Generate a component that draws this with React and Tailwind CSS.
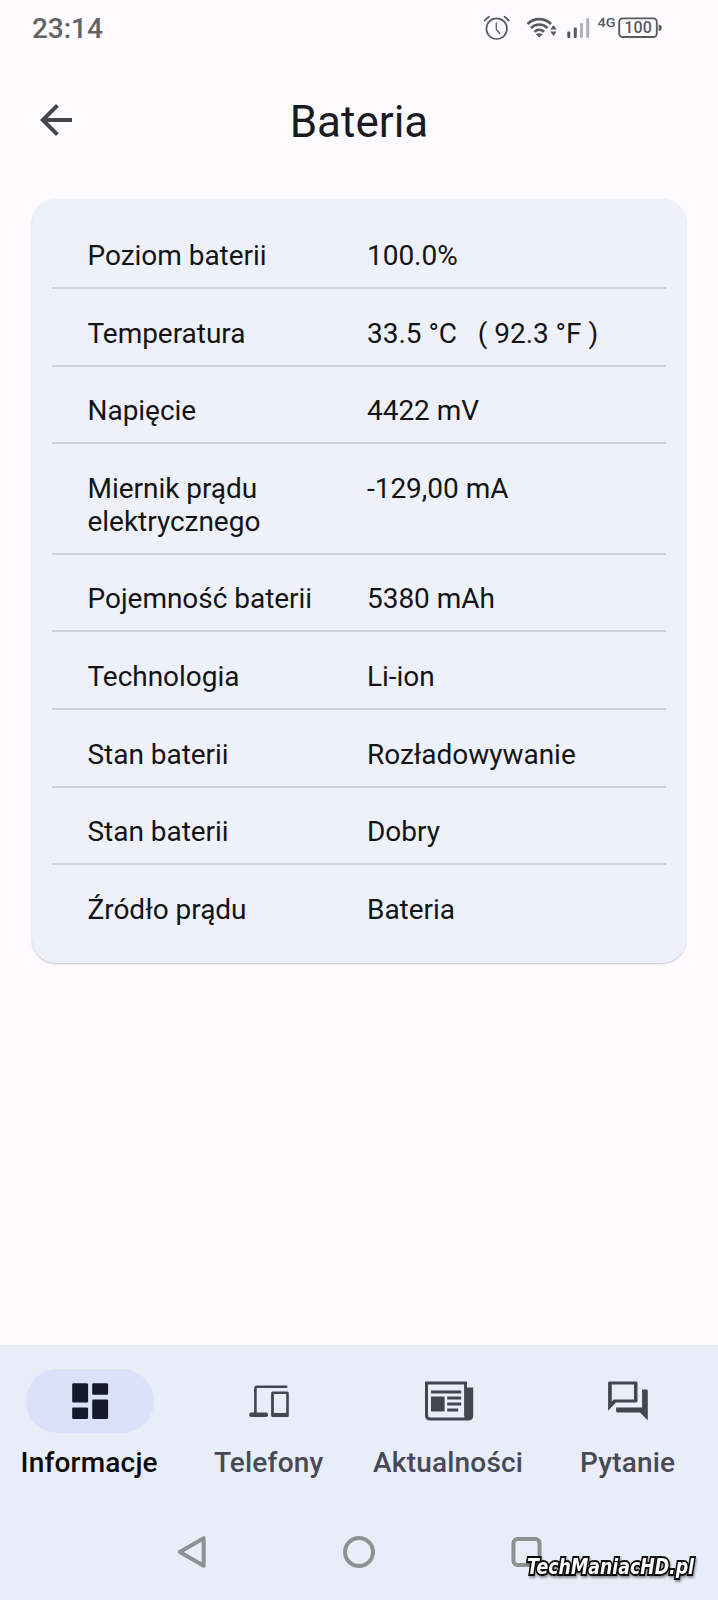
const ROWS = [
  ["Poziom baterii", "100.0%"],
  ["Temperatura", "33.5 °C\u00a0\u00a0\u00a0( 92.3 °F )"],
  ["Napięcie", "4422 mV"],
  ["Miernik prądu elektrycznego", "-129,00 mA"],
  ["Pojemność baterii", "5380 mAh"],
  ["Technologia", "Li-ion"],
  ["Stan baterii", "Rozładowywanie"],
  ["Stan baterii", "Dobry"],
  ["Źródło prądu", "Bateria"],
];

const TABS = [
  { label: "Informacje", Icon: DashboardIcon, active: true },
  { label: "Telefony", Icon: DevicesIcon },
  { label: "Aktualności", Icon: NewspaperIcon },
  { label: "Pytanie", Icon: ChatIcon },
];

function StatusBar() {
  return (
    <header className="flex h-[56px] items-center justify-between pl-8 pr-[55px] text-[#636365]">
      <span className="text-[28px] leading-[33px] font-medium tracking-[-0.05px]">23:14</span>
      <svg width="180" height="30" viewBox="0 0 180 30" fill="none">
        <g stroke="#5a5a5c" strokeWidth="1.700" strokeLinecap="round">
          <circle cx="13.700" cy="15.700" r="10.300" />
          <path d="M13.300 10v6.500l3.500 4" strokeWidth="1.300" />
          <path d="M1.600 7.500l4.300-3.800M21.500 3.700l4.300 3.800" />
        </g>
        <g stroke="#5a5a5c" strokeWidth="2.700">
          <path d="M44.500 11a16.500 16.500 0 0 1 23.500 0" />
          <path d="M48 15a11.500 11.500 0 0 1 16.500 0" />
          <path d="M51.500 18.800a6.500 6.500 0 0 1 9.500 0" />
        </g>
        <path d="M52.800 21.300q3.400-2.200 6.800 0l-3.400 3.300zM67.300 16.400l3.200-4.400 3.200 4.400zM67.300 18.600l3.200 4.400 3.200-4.400z" fill="#5a5a5c" />
        <rect x="84.300" y="18.500" width="3" height="6.500" rx="1" fill="#5a5a5c" />
        <rect x="90.800" y="14.500" width="3" height="10.500" rx="1" fill="#5a5a5c" />
        <rect x="97" y="10" width="3" height="15" rx="1" fill="#b3b2b6" />
        <rect x="103.200" y="5" width="3" height="20" rx="1" fill="#b3b2b6" />
        <text x="114.500" y="13.800" fontSize="13.500" fontWeight="500" textLength="18" lengthAdjust="spacingAndGlyphs" fill="#5a5a5c">
          4G
        </text>
        <rect x="136.200" y="5.400" width="37.600" height="18.600" rx="3.500" stroke="#5a5a5c" strokeWidth="1.900" />
        <path d="M175.700 11.500q3 .5 3 3.300t-3 3.300z" fill="#5a5a5c" />
        <text x="155" y="20.400" fontSize="16" fontWeight="500" textAnchor="middle" textLength="27.500" fill="#5a5a5c">
          100
        </text>
      </svg>
    </header>
  );
}

function DashboardIcon() {
  return (
    <svg width="48" height="48" viewBox="0 0 48 48" fill="#141a29">
      <rect x="6.200" y="6.300" width="15.900" height="19.200" rx="1.300" />
      <rect x="26.200" y="6.300" width="15.900" height="11.500" rx="1.300" />
      <rect x="6.200" y="30.500" width="15.900" height="11.500" rx="1.300" />
      <rect x="26.200" y="22.500" width="15.900" height="19.500" rx="1.300" />
    </svg>
  );
}

function DevicesIcon() {
  return (
    <svg width="48" height="48" viewBox="0 0 48 48" fill="none">
      <path d="M10.400 36V11.500Q10.400 9.800 12.100 9.800H41.200" stroke="#44464f" strokeWidth="2.600" strokeLinecap="round" />
      <rect x="4.300" y="35.400" width="18.600" height="4.500" rx="1.700" fill="#44464f" />
      <path
        fillRule="evenodd"
        fill="#44464f"
        d="M27.600 14.500h14.700q1.500 0 1.500 1.500v22.400q0 1.500-1.500 1.500H27.600q-1.500 0-1.500-1.500V16q0-1.500 1.500-1.500zM28.900 17.100v19h12.300v-19z"
      />
    </svg>
  );
}

function NewspaperIcon() {
  return (
    <svg width="48" height="48" viewBox="0 0 48 48" fill="#44464f" className="overflow-visible">
      <path
        fillRule="evenodd"
        d="M0 4.500H42V10.500H48.200V38.500Q48.200 43.500 43.200 43.500H5.500Q0 43.500 0 38.500ZM3 7.500V38.300Q3 40.600 5.300 40.600H39.800Q39.100 39.500 39.100 38V7.500Z"
      />
      <path d="M6 13.500h30.200v3H6zM6 19.500h13.600v15H6zM22.200 19.500h14v3h-14zM22.200 25.500h14v3h-14zM22.200 31.500h11v3h-11z" />
    </svg>
  );
}

function ChatIcon() {
  return (
    <svg width="48" height="48" viewBox="0 0 48 48" fill="#44464f">
      <path
        fillRule="evenodd"
        d="M5.400 4.500H32.100Q33.500 4.500 33.500 5.900V24.100Q33.500 25.500 32.100 25.500H12L4.100 33.700V5.900Q4.100 4.500 5.400 4.500ZM7.800 7.500V24.400L9.800 22.500H30V7.500Z"
      />
      <path d="M38.100 12.500H42.400Q43.800 12.500 43.800 13.900V43.500L36 35.500H13.500Q12.100 35.500 12.100 34.100V30.500H38.100Z" />
    </svg>
  );
}

function TopBar() {
  return (
    <div className="grid h-[143px] grid-cols-[48px_1fr_48px] items-start px-8">
      <svg width="48" height="48" viewBox="0 0 24 24" fill="#44444f" className="mt-[39.5px]">
        <path d="M20 11H7.830l5.590-5.590L12 4l-8 8 8 8 1.410-1.410L7.830 13H20v-2z" />
      </svg>
      <h1 className="mt-[40px] text-center text-[44px] leading-[52px] text-[#1a1b1f]">Bateria</h1>
    </div>
  );
}

function BatteryCard() {
  return (
    <main className="mx-8 h-[764px] rounded-[24px] bg-[#eff1fa] px-5 pt-[12.4px] shadow-[0_1px_2px_rgba(0,0,0,0.22)]">
      {ROWS.map(([label, value], i) => (
        <div
          key={i}
          className="flex border-b-2 border-[#cfd1da] pt-[28.6px] pb-[14.3px] pl-[35.5px] text-[28px] leading-[32.75px] tracking-[-0.03px] text-[#141416] last:border-0"
        >
          <span className="w-[279.5px] pr-8">{label}</span>
          <span>{value}</span>
        </div>
      ))}
    </main>
  );
}

function TabBar() {
  return (
    <nav className="grid h-[159.5px] grid-cols-4 pt-[24.5px]">
      {TABS.map(({ label, Icon, active }) => (
        <div key={label} className="flex flex-col items-center">
          <div
            className={`flex h-[63.5px] w-[128px] items-center justify-center rounded-full ${active ? "bg-[#dae2f9]" : ""}`}
          >
            <Icon />
          </div>
          <span
            className={`mt-[13px] pr-[1.2px] text-[28px] leading-[33px] font-medium tracking-[0.2px] ${active ? "text-[#0c0c0e]" : "text-[#484a53]"}`}
          >
            {label}
          </span>
        </div>
      ))}
    </nav>
  );
}

function SystemBar() {
  return (
    <div className="grid h-[96px] grid-cols-[168px_167px_34px] items-center pl-[175px]">
      <svg width="34" height="34" viewBox="0 0 34 34" fill="none" stroke="#8f9092" strokeWidth="4" strokeLinejoin="round">
        <path d="M28.700 3.200V30.800L4.700 17Z" />
      </svg>
      <svg width="34" height="34" viewBox="0 0 34 34" fill="none" stroke="#8f9092" strokeWidth="4">
        <circle cx="16" cy="17" r="14" />
      </svg>
      <svg width="34" height="34" viewBox="0 0 34 34" fill="none" stroke="#8f9092" strokeWidth="4">
        <rect x="3.500" y="4" width="26" height="26" rx="4" />
      </svg>
    </div>
  );
}

function Watermark() {
  return (
    <svg
      className="absolute right-[14px] bottom-[10px] overflow-visible drop-shadow-[1px_2px_1px_rgba(0,0,0,0.4)]"
      width="190"
      height="42"
      viewBox="0 0 190 42"
    >
      <text
        x="13"
        y="26"
        fontFamily="DejaVu Sans, sans-serif"
        fontSize="21"
        fontWeight="700"
        fontStyle="italic"
        textLength="167"
        lengthAdjust="spacingAndGlyphs"
        fill="#fff"
        stroke="#0b0b0b"
        strokeWidth="3.800"
        strokeLinejoin="miter"
        strokeMiterlimit="2"
        paintOrder="stroke"
      >
        TechManiacHD.pl
      </text>
    </svg>
  );
}

export default function App() {
  return (
    <div className="relative flex h-[1600px] w-[718px] flex-col bg-[#fdfbff] font-[Roboto,sans-serif]">
      <StatusBar />
      <TopBar />
      <BatteryCard />
      <footer className="mt-auto bg-[#e9edf8]">
        <TabBar />
        <SystemBar />
      </footer>
      <Watermark />
    </div>
  );
}
